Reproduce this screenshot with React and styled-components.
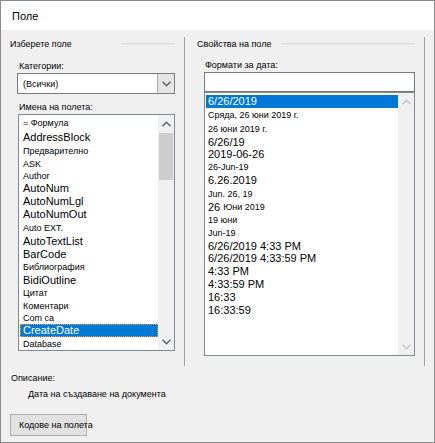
import React from 'react'
import styled, { createGlobalStyle } from 'styled-components'

const GlobalStyle = createGlobalStyle`
  html, body {
    margin: 0;
    padding: 0;
    background: #ffffff;
  }
  body {
    font-family: "Liberation Sans", Arial, sans-serif;
    color: #000;
  }
`

const Dialog = styled.div`
  width: 435px;
  height: 443px;
  box-sizing: border-box;
  border: 1px solid #8a8a8a;
  background: #f0f0f0;
  display: flex;
  flex-direction: column;
  overflow: hidden;
`

const TitleBar = styled.div`
  height: 29px;
  flex-shrink: 0;
  background: #fff;
  display: flex;
  align-items: center;
  padding-left: 11px;
  font-size: 11px;
`

const Columns = styled.div`
  display: flex;
  margin-top: 7px;
  height: 329px;
`

const Pane = styled.div`
  width: ${p => p.$width}px;
  box-sizing: border-box;
  border-right: 1px solid #a0a0a0;
  padding: 0 9px 0 ${p => p.$pad}px;
  display: flex;
  flex-direction: column;
`

const GroupHeader = styled.div`
  height: 14px;
  display: flex;
  align-items: center;
  font-size: 9px;
`

const HeaderRule = styled.div`
  margin-left: auto;
  width: ${p => p.$width}px;
  height: 1px;
  background: #d5d5d5;
  margin-top: -2px;
`

const Field = styled.div`
  display: flex;
  flex-direction: column;
  margin-left: ${p => p.$indent}px;
`

const Label = styled.div`
  height: 14px;
  line-height: 14px;
  font-size: 9px;
  margin-top: ${p => p.$top || 0}px;
  padding-left: ${p => p.$pad || 2}px;
`

const Combo = styled.div`
  height: 21px;
  box-sizing: border-box;
  border: 1px solid #7a7a7a;
  background: #fff;
  display: flex;
  font-size: 9px;
`

const ComboText = styled.div`
  flex: 1;
  display: flex;
  align-items: center;
  padding-left: 5px;
`

const ComboButton = styled.div`
  width: 16px;
  background: #e5e5e5;
  border-left: 1px solid #adadad;
  display: flex;
  align-items: center;
  justify-content: center;
`

const TextInput = styled.div`
  height: 20px;
  box-sizing: border-box;
  border: 1px solid #7a7a7a;
  background: #fff;
`

const ListBox = styled.div`
  height: ${p => p.$height}px;
  box-sizing: border-box;
  border: 1px solid #828790;
  background: #fff;
  display: flex;
  overflow: hidden;
  margin-left: ${p => p.$shift || 0}px;
`

const Items = styled.div`
  flex: 1;
  display: flex;
  flex-direction: column;
  padding-top: ${p => p.$top}px;
  overflow: hidden;
`

const Item = styled.div`
  flex-shrink: 0;
  height: ${p => p.$h}px;
  line-height: ${p => p.$h}px;
  font-size: ${p => p.$size}px;
  margin-left: 1px;
  padding-left: ${p => p.$pad}px;
  white-space: nowrap;
  box-sizing: border-box;
  background: ${p => (p.$selected ? '#0078d7' : 'transparent')};
  color: ${p => (p.$selected ? '#fff' : '#000')};
  border: 1px ${p => (p.$focus ? 'dotted #f59a3a' : 'solid transparent')};
  border-left-width: 1px;
  display: flex;
  align-items: center;
`

const Small = styled.span`
  font-size: 9px;
  margin-left: 3px;
`

const ScrollBar = styled.div`
  width: 16px;
  background: #f0f0f0;
  display: flex;
  flex-direction: column;
`

const Arrow = styled.div`
  height: 17px;
  flex-shrink: 0;
  display: flex;
  align-items: center;
  justify-content: center;
  margin-top: ${p => (p.$down ? 'auto' : '0')};
`

const Thumb = styled.div`
  height: 47px;
  margin: 1px 1px 0;
  background: #cdcdcd;
`

const Footer = styled.div`
  display: flex;
  flex-direction: column;
  padding-left: 9px;
  margin-top: 5px;
  font-size: 9px;
`

const Description = styled.div`
  height: 14px;
  line-height: 14px;
  padding-left: 18px;
  margin-top: 2px;
`

const Button = styled.div`
  width: 77px;
  height: 22px;
  margin-top: 13px;
  box-sizing: border-box;
  border: 1px solid #adadad;
  background: #e1e1e1;
  display: flex;
  align-items: center;
  padding-left: 8px;
  white-space: nowrap;
  overflow: visible;
`

function Chevron({ down, color = '#606060' }) {
  return (
    <svg width="9" height="6" viewBox="0 0 9 6">
      <path
        d={down ? 'M0.5 0.8 L4.5 4.8 L8.5 0.8' : 'M0.5 5.2 L4.5 1.2 L8.5 5.2'}
        fill="none"
        stroke={color}
        strokeWidth="1.4"
      />
    </svg>
  )
}

const fieldNames = [
  ['= Формула', 9, 15],
  ['AddressBlock', 11, 13],
  ['Предварително', 9, 14],
  ['ASK', 9, 12],
  ['Author', 9, 12],
  ['AutoNum', 11, 12],
  ['AutoNumLgl', 11, 14],
  ['AutoNumOut', 11, 13],
  ['Auto EXT.', 9, 14],
  ['AutoTextList', 11, 12],
  ['BarCode', 11, 14],
  ['Библиография', 9, 13],
  ['BidiOutline', 11, 12],
  ['Цитат', 9, 14],
  ['Коментари', 9, 13],
  ['Com ca', 9, 11],
  ['CreateDate', 11, 13, true],
  ['Database', 9, 14],
]

const dateFormats = [
  ['6/26/2019', 11, 13, true],
  ['Сряда, 26 юни 2019 г.', 9, 15],
  ['26 юни 2019 г.', 9, 13],
  ['6/26/19', 11, 12],
  ['2019-06-26', 11, 13],
  ['26-Jun-19', 9, 13],
  ['6.26.2019', 11, 13],
  ['Jun. 26, 19', 9, 14],
  [['26', 'Юни 2019'], 11, 13],
  ['19 юни', 9, 13],
  ['Jun-19', 9, 13],
  ['6/26/2019 4:33 PM', 11, 12],
  ['6/26/2019 4:33:59 PM', 11, 13],
  ['4:33 PM', 11, 13],
  ['4:33:59 PM', 11, 13],
  ['16:33', 11, 13],
  ['16:33:59', 11, 13],
]

export default function App() {
  return (
    <>
      <GlobalStyle />
      <Dialog>
        <TitleBar>Поле</TitleBar>
        <Columns>
          <Pane $width={184} $pad={9}>
            <GroupHeader>
              Изберете поле
              <HeaderRule $width={54} />
            </GroupHeader>
            <Field $indent={7}>
              <Label $top={8}>Категории:</Label>
              <Combo>
                <ComboText>(Всички)</ComboText>
                <ComboButton>
                  <Chevron down />
                </ComboButton>
              </Combo>
              <Label $top={6}>Имена на полета:</Label>
              <ListBox $height={237} $shift={1}>
                <Items $top={1}>
                  {fieldNames.map(([text, size, h, sel]) => (
                    <Item key={text} $size={size} $h={h} $pad={2} $selected={sel} $focus={sel}>
                      {text}
                    </Item>
                  ))}
                </Items>
                <ScrollBar>
                  <Arrow>
                    <Chevron />
                  </Arrow>
                  <Thumb />
                  <Arrow $down>
                    <Chevron down />
                  </Arrow>
                </ScrollBar>
              </ListBox>
            </Field>
          </Pane>
          <Pane $width={240} $pad={12}>
            <GroupHeader>
              Свойства на поле
              <HeaderRule $width={134} />
            </GroupHeader>
            <Field $indent={7}>
              <Label $top={7} $pad={1}>Формати за дата:</Label>
              <TextInput />
              <ListBox $height={264}>
                <Items $top={2}>
                  {dateFormats.map(([text, size, h, sel], i) => (
                    <Item key={i} $size={size} $h={h} $pad={1} $selected={sel}>
                      {Array.isArray(text) ? (
                        <>
                          {text[0]}
                          <Small>{text[1]}</Small>
                        </>
                      ) : (
                        text
                      )}
                    </Item>
                  ))}
                </Items>
                <ScrollBar>
                  <Arrow>
                    <Chevron color="#c2c2c2" />
                  </Arrow>
                  <Arrow $down>
                    <Chevron down color="#c2c2c2" />
                  </Arrow>
                </ScrollBar>
              </ListBox>
            </Field>
          </Pane>
        </Columns>
        <Footer>
          <Label $pad={1}>Описание:</Label>
          <Description>Дата на създаване на документа</Description>
          <Button>Кодове на полета</Button>
        </Footer>
      </Dialog>
    </>
  )
}
